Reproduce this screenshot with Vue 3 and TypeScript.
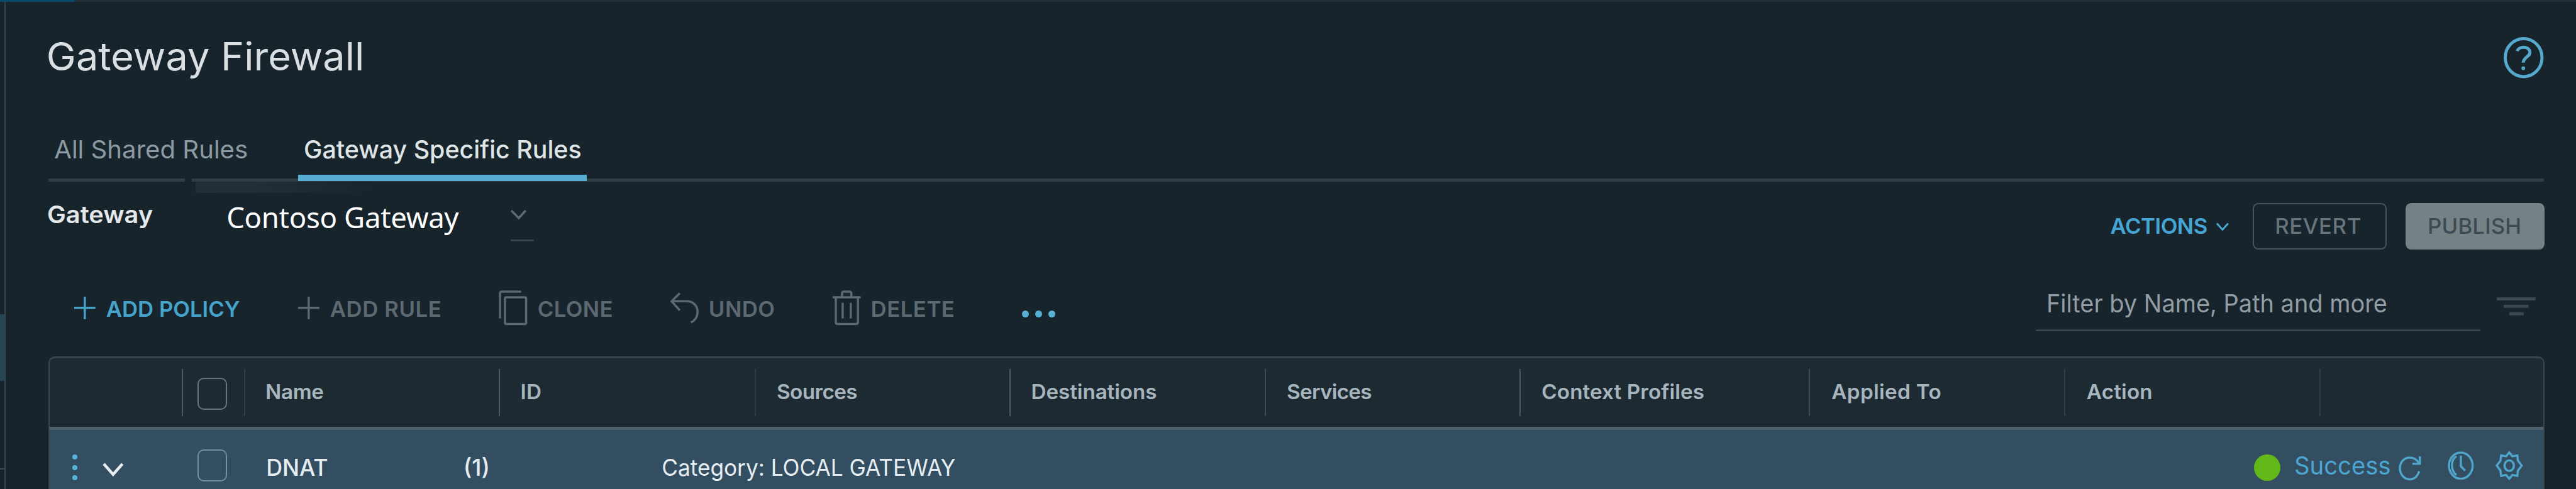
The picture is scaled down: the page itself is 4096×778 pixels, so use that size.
<script setup lang="ts">
import type { Directive } from 'vue'

interface Column { label: string; width: number; text: number; tone: 'bright' | 'mid' | 'dim' }

const columns: Column[] = [
  { label: 'Name', width: 409, text: 90, tone: 'dim' },
  { label: 'ID', width: 410, text: 30, tone: 'bright' },
  { label: 'Sources', width: 409, text: 127, tone: 'dim' },
  { label: 'Destinations', width: 409, text: 198, tone: 'bright' },
  { label: 'Services', width: 409, text: 134, tone: 'mid' },
  { label: 'Context Profiles', width: 464, text: 258, tone: 'bright' },
  { label: 'Applied To', width: 409, text: 174, tone: 'mid' },
  { label: 'Action', width: 410, text: 103, tone: 'dim' },
  { label: '', width: 355, text: 0, tone: 'dim' },
]

// Makes the ink of a label span exactly the given width: by tracking,
// or with the .wide modifier by widening the letters themselves.
const vFit: Directive<HTMLElement, number, 'wide'> = {
  mounted(el, { value, modifiers }) {
    const text = el.textContent ?? ''
    const ctx = document.createElement('canvas').getContext('2d')
    if (!ctx || text.length < 2) return
    const cs = getComputedStyle(el)
    ctx.font = `${cs.fontWeight} 100px ${cs.fontFamily}`
    const k = parseFloat(cs.fontSize) / 100
    const m = ctx.measureText(text)
    const ink = (m.actualBoundingBoxLeft + m.actualBoundingBoxRight) * k
    el.style.width = `${value}px`
    el.style.textIndent = `${m.actualBoundingBoxLeft * k}px`
    if (modifiers.wide) {
      el.style.transformOrigin = '0 50%'
      el.style.transform = `scaleX(${value / ink})`
    } else {
      el.style.letterSpacing = `${(value - ink) / (text.length - 1)}px`
    }
  },
}
</script>

<template>
  <div class="page">
    <div class="top-strip"><i></i></div>
    <aside class="rail"><i class="mark"></i><i class="sep"></i></aside>
    <main class="main">
      <header class="head">
        <h1 v-fit.wide="502" class="t title">Gateway Firewall</h1>
        <svg class="help" viewBox="0 0 68 68">
          <ellipse cx="34" cy="34" rx="29.5" ry="30.5" />
          <path d="M23.5 23.5C26 16 42 14.500 44 24.500C45.500 32.500 33.500 32.500 33.500 42" />
          <circle class="dot" cx="33.500" cy="51" r="3" />
        </svg>
      </header>

      <nav class="tabs">
        <div class="tab"><span v-fit.wide="308" class="t">All Shared Rules</span></div>
        <div class="tab active"><span v-fit.wide="442" class="t">Gateway Specific Rules</span></div>
      </nav>

      <section class="gateway">
        <span v-fit.wide="167" class="t gw-label">Gateway</span>
        <div class="select">
          <span v-fit="370" class="t gw-name">Contoso Gateway</span>
          <div class="caret">
            <svg viewBox="0 0 26 18"><path d="M1 2L13 14L24 2" /></svg>
          </div>
        </div>
        <div class="buttons">
          <span v-fit="154" class="t actions">ACTIONS</span>
          <svg class="actions-caret" viewBox="0 0 20 14"><path d="M1 1.500L10 11.500L19 1.500" /></svg>
          <button class="btn revert"><span v-fit="134" class="t">REVERT</span></button>
          <button class="btn publish"><span v-fit="145" class="t">PUBLISH</span></button>
        </div>
      </section>

      <section class="toolbar">
        <div class="tool primary">
          <svg class="plus" viewBox="0 0 34 36"><path d="M17 0V36M0 18H34" /></svg>
          <span v-fit="213" class="t">ADD POLICY</span>
        </div>
        <div class="tool add-rule">
          <svg class="plus" viewBox="0 0 34 36"><path d="M17 0V36M0 18H34" /></svg>
          <span v-fit="176" class="t">ADD RULE</span>
        </div>
        <div class="tool clone">
          <svg class="icon" viewBox="0 0 46 56"><path d="M2 45V5Q2 2 5 2H36" /><rect x="10" y="11" width="34" height="43" rx="2" /></svg>
          <span v-fit="117" class="t">CLONE</span>
        </div>
        <div class="tool undo">
          <svg class="icon" viewBox="0 0 46 56"><path d="M15 4.500L2 17.500L15 32M2 17.500H26C37 17.500 43.500 25 43.500 34C43.500 42 40 48 33 51.500" /></svg>
          <span v-fit="102" class="t">UNDO</span>
        </div>
        <div class="tool delete">
          <svg class="icon" viewBox="0 0 46 56"><path d="M0 11H45M15 11V5Q15 2 18 2H27Q30 2 30 5V11M5 11V51Q5 54 8 54H37Q40.500 54 40.500 51V11M16 20V45M29 20V45" /></svg>
          <span v-fit="130" class="t">DELETE</span>
        </div>
        <div class="more"><i></i><i></i><i></i></div>
        <div class="filter"><span v-fit.wide="542" class="t">Filter by Name, Path and more</span></div>
        <svg class="filter-icon" viewBox="0 0 62 32"><path d="M0 3.500H62M11 15.500H51M20 27.500H43" /></svg>
      </section>

      <section class="table">
        <div class="thead">
          <div class="lead"></div>
          <div class="pick"><i class="box"></i></div>
          <div v-for="(c, i) in columns" :key="i" class="th" :class="c.tone" :style="{ width: c.width + 'px' }">
            <span v-if="c.label" v-fit="c.text" class="t">{{ c.label }}</span>
          </div>
        </div>
        <div class="row">
          <div class="kebab"><i></i><i></i><i></i></div>
          <svg class="expand" viewBox="0 0 34 24"><path d="M2 3L17 20L32 3" /></svg>
          <i class="box"></i>
          <span v-fit.wide="95" class="t policy">DNAT</span>
          <span v-fit.wide="36" class="t count">(1)</span>
          <span v-fit.wide="469" class="t category">Category: LOCAL GATEWAY</span>
          <i class="status"></i>
          <span v-fit.wide="151" class="t success">Success</span>
          <svg class="refresh" viewBox="0 0 36 40"><path d="M33 25C30 34 25 38 18 38C9 38 2 30 2 20C2 10 9 3 18 3C25 3 30 7 33 13M34 1V13H22" /></svg>
          <svg class="clock" viewBox="0 0 42 46"><ellipse cx="21" cy="23" rx="19" ry="21" /><path d="M21 7V24L28 31M14 8C5 13 4 31 14 38" /></svg>
          <svg class="gear" viewBox="0 0 44 46">
            <path d="M22 2L27 8L35 6.500L36 15L42 23L36 31L35 39.500L27 38L22 44L17 38L9 39.500L8 31L2 23L8 15L9 6.500L17 8Z" />
            <ellipse cx="22" cy="23" rx="7.500" ry="8.500" />
          </svg>
        </div>
      </section>
    </main>
  </div>
</template>

<style>
html, body { margin: 0; background: #18242b; overflow: hidden; }
</style>

<style scoped>
.page {
  zoom: 0.9915;
  position: relative;
  display: flex;
  width: 4131px;
  height: 785px;
  overflow: hidden;
  background: #18242b;
  font-family: Inter, "Noto Sans", sans-serif;
}
.page * { box-sizing: border-box; }
i { display: block; }
svg { display: block; flex: none; fill: none; stroke: currentColor; overflow: visible; }
.t { display: block; flex: none; white-space: nowrap; margin: 0; }
.top-strip { position: absolute; left: 0; top: 0; width: 100%; height: 3px; background: #222e36; }
.top-strip i { width: 120px; height: 3px; background: #064a6c; }

.rail { flex: none; width: 9px; height: 785px; border-right: 3px solid #36444b; padding-top: 504px; }
.mark { height: 107px; background: #264451; }
.sep { margin-top: 140px; height: 2px; background: #3d4c54; }

.main { flex: none; width: 4072px; padding-left: 69px; }
.head { display: flex; align-items: flex-start; height: 187px; justify-content: space-between; }
.title { margin-top: 50px; height: 80px; line-height: 80px; font-size: 62px; font-weight: 400; color: #dadfe1; }
.help { width: 68px; height: 68px; margin: 59px 0 0; color: #55a9cc; stroke-width: 5; }
.help .dot { fill: currentColor; stroke: none; }

.tabs {
  display: flex;
  height: 104px;
  background: linear-gradient(#303d45, #303d45) 0 99px / 219px 5px no-repeat,
    linear-gradient(#303d45, #303d45) 230px 99px / 3772px 5px no-repeat;
}
.tab { width: 400px; padding: 23px 0 0 10px; font-size: 40.500px; line-height: 60px; color: #8b9aa3; }
.tab.active { width: 463px; padding-left: 11px; height: 103px; color: #dfe4e6; border-bottom: 11px solid #57aed2; font-weight: 500; }

.gateway {
  display: flex;
  height: 139px;
  background: linear-gradient(90deg, #232f36, #222e35 35%, #18242b) 236px 0 / 290px 18px no-repeat;
}
.gw-label { padding-top: 24px; line-height: 60px; font-size: 38.500px; font-weight: 600; color: #e4e8ea; }
.select { display: flex; width: 660px; padding-left: 121px; }
.gw-name { padding-top: 28px; line-height: 60px; font-family: "Noto Sans", sans-serif; font-size: 46px; color: #fff; }
.caret { width: 37px; height: 96px; margin-left: 83px; padding-top: 45px; border-bottom: 4px solid #36434b; color: #5b6a73; }
.caret svg { width: 26px; height: 18px; stroke-width: 3.500; }
.buttons { display: flex; align-items: center; height: 74px; margin: 35px 1px 0 auto; font-size: 35px; font-weight: 500; line-height: 60px; }
.actions { color: #45a6d6; font-weight: 600; }
.actions-caret { width: 20px; height: 14px; margin: 3px 39px 0 15px; color: #4aa9d2; stroke-width: 3; }
.btn { display: block; height: 74px; padding: 0; border-radius: 9px; font: inherit; text-align: left; }
.revert { width: 215px; margin-right: 30px; padding-left: 36px; border: 3px solid #46545c; background: none; color: #67747c; }
.publish { width: 223px; padding-left: 38px; border: 0; background: #758185; color: #3c4b53; margin-right: -1px; }

.toolbar { display: flex; align-items: flex-start; height: 142px; font-size: 35px; font-weight: 600; line-height: 60px; color: #5c6971; padding-top: 36px; }
.tool { display: flex; align-items: center; height: 60px; }
.primary { color: #45a4cc; margin-left: 41px; width: 359px; }
.plus { width: 34px; height: 36px; margin-right: 18px; stroke-width: 3.500; margin-top: -4px; }
.add-rule { width: 322px; }
.icon { width: 46px; height: 56px; stroke-width: 3.500; margin-right: 18px; margin-top: -4px; }
.clone { width: 275px; }
.undo { width: 260px; }
.delete { width: 304px; }
.more { display: flex; gap: 10px; padding-top: 32px; width: 60px; }
.more i { width: 11px; height: 11px; border-radius: 50%; background: #56b0d6; flex: none; }
.filter { width: 713px; height: 66px; margin-left: auto; padding-left: 20px; border-bottom: 4px solid #35424a; font-size: 39.500px; font-weight: 400; line-height: 43px; color: #939da5; }
.filter-icon { width: 62px; height: 32px; margin: 10px 15px 0 26px; color: #394851; stroke-width: 5; }

.table { width: 4003px; height: 213px; border: 3px solid #37454d; border-bottom: 0; border-top-width: 4px; border-radius: 10px 10px 0 0; background: #1d2a32; overflow: hidden; }
.thead { display: flex; align-items: center; height: 115px; border-bottom: 6px solid #4d606c; font-size: 33.500px; font-weight: 600; line-height: 75px; color: #a7b6be; }
.lead { width: 211px; flex: none; }
.pick { width: 100px; height: 75px; flex: none; border-left: 3px solid #4b5a62; padding: 14px 0 0 24px; }
.box { flex: none; width: 47px; height: 51px; border: 3px solid #67767e; border-radius: 10px; }
.th { height: 75px; flex: none; padding-left: 35px; line-height: 73px; border-left: 3px solid #303e46; }
.th.bright { border-color: #4a5962; }
.th.mid { border-color: #3d4b54; }
.row { display: flex; align-items: flex-start; height: 100px; background: #324e60; font-size: 37px; line-height: 60px; color: #e6edf1; font-weight: 500; }
.kebab { width: 8px; margin: 39px 41px 0 36px; flex: none; }
.kebab i { width: 8px; height: 8px; border-radius: 50%; background: #58b4da; margin-bottom: 9px; }
.expand { width: 34px; height: 24px; stroke-width: 4.500; margin: 51px 119px 0 -1px; }
.row .box { margin-top: 31px; height: 52px; border-color: #7290a1; margin-right: 66px; }
.policy, .count, .category { margin-top: 30px; }
.count { margin-left: 221px; }
.category { margin-left: 281px; font-weight: 400; }
.status { flex: none; width: 42px; height: 43px; border-radius: 50%; background: #62b816; margin: 39px 24px 0 auto; }
.success { margin-top: 27px; font-size: 39.500px; font-weight: 400; color: #4da5d2; }
.refresh, .clock, .gear { color: #4fa5cc; stroke-width: 3.500; }
.refresh { width: 36px; height: 40px; margin: 41px 0 0 15px; }
.clock { width: 42px; height: 46px; margin: 34px 0 0 42px; }
.gear { width: 44px; height: 46px; margin: 34px 33px 0 35px; }
</style>
